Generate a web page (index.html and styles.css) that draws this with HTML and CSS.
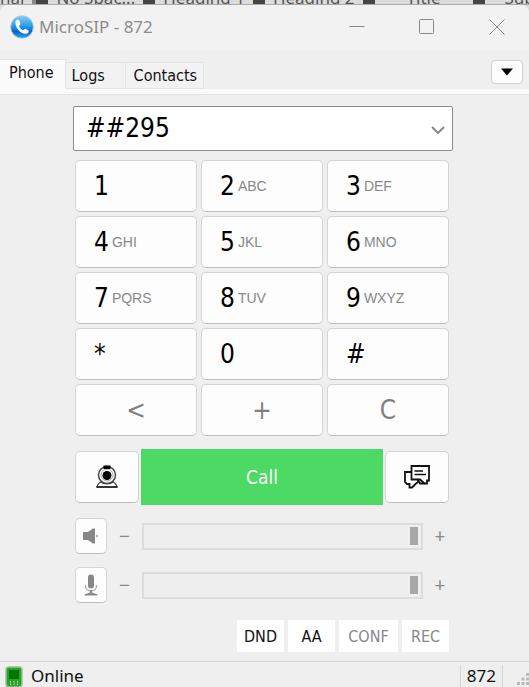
FILE: index.html
```html
<!DOCTYPE html>
<html lang="en">
<head>
    <meta charset="UTF-8">
    <meta name="viewport" content="width=device-width, initial-scale=1.0">
    <title>MicroSIP - 872</title>
    <link rel="stylesheet" href="styles.css">
</head>
<body>
    <div class="backdrop">
        <span>nal</span>
        <i class="mark double"></i>
        <span>No Spac...</span>
        <i class="mark"></i>
        <span>Heading 1</span>
        <i class="mark"></i>
        <span>Heading 2</span>
        <i class="mark"></i>
        <span class="style-title">Title</span>
        <i class="mark"></i>
        <span class="style-sub">Sub</span>
    </div>
    <div class="window">
        <header class="title-bar">
            <svg class="logo" viewBox="0 0 24 24">
                <defs>
                    <linearGradient id="ball" x1="0" y1="0" x2="0" y2="1">
                        <stop offset="0" stop-color="#8ccdf0"/>
                        <stop offset="0.45" stop-color="#2a9de6"/>
                        <stop offset="0.7" stop-color="#0b62cc"/>
                        <stop offset="1" stop-color="#25aef2"/>
                    </linearGradient>
                </defs>
                <circle cx="12" cy="12" r="11.3" fill="url(#ball)" stroke="#a9c9e2" stroke-width="0.8"/>
                <path d="M5.500 6.500C6.500 4.500 8.500 4.500 9.300 5.500L10.500 8.500C10.800 9.600 9.200 10.300 9 11C9.500 13 11.300 14.600 13 15.200C13.800 15 14.500 13.600 15.500 13.800L18.500 15.500C19.300 16.500 18 18.600 16.300 18.800C10.500 19.300 4.800 12.500 5.500 6.500Z" fill="#f4fbff"/>
            </svg>
            <h1>MicroSIP - 872</h1>
            <div class="window-btns">
                <button aria-label="Minimize">
                    <svg viewBox="0 0 16 16"><path d="M0.500 7.500H15.500"/></svg>
                </button>
                <button aria-label="Maximize">
                    <svg viewBox="0 0 16 16"><rect x="0.500" y="0.500" width="14" height="14" rx="1"/></svg>
                </button>
                <button aria-label="Close">
                    <svg viewBox="0 0 16 16"><path d="M0.500 0.500L15.500 15.500M15.500 0.500L0.500 15.500"/></svg>
                </button>
            </div>
        </header>
        <nav class="tabs">
            <button class="tab active">Phone</button>
            <button class="tab">Logs</button>
            <button class="tab">Contacts</button>
            <button class="menu-btn" aria-label="Menu">
                <svg viewBox="0 0 12 8"><path d="M0 0.500H12L6 7.500Z"/></svg>
            </button>
        </nav>
        <main class="phone">
            <div class="number-box">
                <input type="text" value="##295" aria-label="Number">
                <button aria-label="Recent numbers">
                    <svg viewBox="0 0 14 8"><path d="M1 1L7 7L13 1"/></svg>
                </button>
            </div>
            <div class="keypad">
                <button class="key">1</button>
                <button class="key">2<small>ABC</small></button>
                <button class="key">3<small>DEF</small></button>
                <button class="key">4<small>GHI</small></button>
                <button class="key">5<small>JKL</small></button>
                <button class="key">6<small>MNO</small></button>
                <button class="key">7<small>PQRS</small></button>
                <button class="key">8<small>TUV</small></button>
                <button class="key">9<small>WXYZ</small></button>
                <button class="key">*</button>
                <button class="key">0</button>
                <button class="key">#</button>
                <button class="key edit">&lt;</button>
                <button class="key edit">+</button>
                <button class="key edit">C</button>
            </div>
            <div class="call-row">
                <button class="side-btn" aria-label="Video call">
                    <svg width="22" height="24" viewBox="0 0 22 24">
                        <circle cx="11" cy="10" r="8.500" fill="#fff" stroke="#444" stroke-width="1.500"/>
                        <circle cx="11" cy="10" r="6" fill="none" stroke="#aaa"/>
                        <circle cx="11" cy="10.500" r="4.500"/>
                        <path d="M7.500 0.500H14.500V4H7.500Z"/>
                        <path d="M4.500 17C3 18 1.500 19.500 1 21.800H21C20.500 19.500 19 18 17.500 17C14 19.500 8 19.500 4.500 17Z" fill="#fff" stroke="#444" stroke-width="1.300"/>
                        <path d="M0.500 21H21.500V23H0.500Z" fill="#333"/>
                    </svg>
                </button>
                <button class="call-btn">Call</button>
                <button class="side-btn" aria-label="Message">
                    <svg width="26" height="24" viewBox="0 0 26 24" fill="#fff" stroke="#111" stroke-width="1.800">
                        <path d="M1 7H14V17L11.500 19L8 22.500H5.500V19H3L1 17Z"/>
                        <path d="M7.500 1H25V15.500H23V18.500H20.500L16 14.500H7.500Z"/>
                        <path d="M14 15L16 18.500L20.500 18.500" fill="none"/>
                        <path d="M10.500 6H19M10.500 9.500H22" stroke-width="1.500"/>
                    </svg>
                </button>
            </div>
            <div class="volume-row">
                <button class="mute-btn" aria-label="Mute speaker">
                    <svg width="16" height="16" viewBox="0 0 16 16">
                        <path d="M0 4H5L10 0.500H12V15.500H10L5 12H0Z"/>
                        <path d="M13.500 6.500Q16.500 8 13.500 9.500Z"/>
                    </svg>
                </button>
                <span class="sign">−</span>
                <input type="range" min="0" max="100" value="100" aria-label="Speaker volume">
                <span class="sign">+</span>
            </div>
            <div class="volume-row">
                <button class="mute-btn" aria-label="Mute microphone">
                    <svg width="14" height="22" viewBox="0 0 14 22">
                        <rect x="4" y="0.500" width="6" height="14" rx="3"/>
                        <path d="M1.500 11V12C1.500 18.500 12.500 18.500 12.500 12V11" fill="none" stroke="#aaa" stroke-width="1.300"/>
                        <path d="M6 16H8V18.500L13.500 20.500V21.500H0.500V20.500L6 18.500Z"/>
                    </svg>
                </button>
                <span class="sign">−</span>
                <input type="range" min="0" max="100" value="100" aria-label="Microphone volume">
                <span class="sign">+</span>
            </div>
            <div class="options">
                <button>DND</button>
                <button>AA</button>
                <button class="off wide">CONF</button>
                <button class="off">REC</button>
            </div>
        </main>
        <footer class="status-bar">
            <svg class="online-icon" viewBox="0 0 18 21">
                <rect x="1" y="1" width="16" height="20" rx="3" fill="#2f9e2f" stroke="#8ccb8c" stroke-width="1.500"/>
                <rect x="4" y="4" width="10" height="9" fill="#007500"/>
                <path d="M5.500 15V20M9 15V20M12.500 15V20" stroke="#b9e6b0" stroke-dasharray="1.500 1"/>
            </svg>
            <span class="status">Online</span>
            <span class="account">872</span>
            <svg class="grip" viewBox="0 0 12 12">
                <path d="M9 0H12V3H9ZM4.500 4.500H7.500V7.500H4.500ZM9 4.500H12V7.500H9ZM0 9H3V12H0ZM4.500 9H7.500V12H4.500ZM9 9H12V12H9Z"/>
            </svg>
        </footer>
    </div>
</body>
</html>
```
FILE: styles.css
```css
* {
    box-sizing: border-box;
}
body {
    margin: 0;
    min-height: 100vh;
    display: flex;
    flex-direction: column;
    background: #dcdcdc;
    font-family: Tahoma, "DejaVu Sans Condensed", "Noto Sans", sans-serif;
    font-size: 16px;
    color: #111;
}
button {
    padding: 0;
    border: 0;
    font: inherit;
    color: inherit;
    background: none;
    cursor: pointer;
}

/* sliver of the document window behind */
.backdrop {
    height: 5px;
    display: flex;
    align-items: flex-end;
    gap: 8px;
    overflow: hidden;
    white-space: nowrap;
    font-family: "Noto Sans", "Open Sans", sans-serif;
    font-size: 17px;
    line-height: 12px;
    color: #555;
    border-bottom: 1px solid #aaa;
}
.backdrop span {
    flex: none;
}
.mark {
    flex: none;
    width: 12px;
    height: 4px;
    background: #444;
}
.double {
    width: 16px;
    border-left: 4px solid #888;
}
.style-title {
    margin: 0 24px;
}
.style-sub {
    margin-left: 12px;
}

.window {
    flex: 1;
    display: flex;
    flex-direction: column;
    background: #efefef;
    border-radius: 8px 8px 0 0;
    overflow: hidden;
}
.title-bar {
    height: 46px;
    display: flex;
    align-items: center;
    padding: 0 24px 3px 10px;
    background: #f2f2f2;
}
.logo {
    width: 24px;
    height: 24px;
}
.title-bar h1 {
    margin: 0 0 0 5px;
    font-family: "Noto Sans", "Open Sans", sans-serif;
    font-size: 17px;
    font-weight: 400;
    color: #8c8c8c;
}
.window-btns {
    margin-left: auto;
    display: flex;
    gap: 54px;
}
.window-btns button {
    display: flex;
}
.window-btns svg {
    width: 16px;
    height: 16px;
    fill: none;
    stroke: #888;
}

.tabs {
    height: 43px;
    display: flex;
    align-items: flex-end;
    border-bottom: 5px solid #fafafa;
    box-shadow: 0 1px #e4e4e4;
}
.tab {
    height: 27px;
    padding: 0 6px 0 8px;
    border: 1px solid #e4e4e4;
    border-left: 0;
    background: #f2f2f2;
}
.tab:nth-child(2) {
    width: 60px;
    padding-left: 6px;
    text-align: left;
}
.tab.active {
    height: 30px;
    padding: 0 11px 4px 9px;
    border-bottom: 0;
    background: #fbfbfb;
}
.menu-btn {
    width: 32px;
    height: 24px;
    margin: 0 6px 5px auto;
    border: 1px solid #d0d0d0;
    border-radius: 4px;
    background: #fdfdfd;
}
.menu-btn svg {
    width: 12px;
    height: 8px;
    display: block;
    margin: auto;
}

.phone {
    flex: 1;
    padding: 12px 80px 0 75px;
}
.number-box {
    height: 45px;
    display: flex;
    margin: 0 -4px 9px -2px;
    border: 1px solid #8c8c8c;
    border-radius: 2px;
    background: #fff;
}
.number-box input {
    flex: 1;
    min-width: 0;
    padding: 0 12px 2px;
    border: 0;
    outline: 0;
    background: none;
    font: inherit;
    font-size: 26px;
    color: #000;
}
.number-box button {
    width: 28px;
}
.number-box svg {
    width: 14px;
    height: 8px;
    fill: none;
    stroke: #888;
    stroke-width: 2;
}
.keypad {
    display: grid;
    grid-template-columns: repeat(3, 1fr);
    gap: 4px;
}
.key,
.side-btn,
.mute-btn {
    border: 1px solid #d4d4d4;
    border-bottom-color: #bcbcbc;
    border-radius: 5px;
    background: #fdfdfd;
}
.key {
    height: 52px;
    display: flex;
    align-items: center;
    padding-left: 18px;
    font-size: 26px;
    color: #000;
}
.key small {
    margin-left: 3px;
    font-family: "Liberation Sans", Arial, sans-serif;
    font-size: 14px;
    color: #888;
}
.key.edit {
    justify-content: center;
    padding: 0;
    color: #808080;
}
.call-row {
    display: flex;
    align-items: center;
    gap: 2px;
    margin: 13px 0;
}
.side-btn {
    width: 64px;
    height: 52px;
    display: grid;
    place-items: center;
}
.call-btn {
    flex: 1;
    height: 56px;
    background: #4cd964;
    font-size: 19px;
    color: #fff;
}
.volume-row {
    height: 36px;
    display: flex;
    align-items: center;
    margin-bottom: 13px;
}
.mute-btn {
    width: 32px;
    height: 36px;
    display: grid;
    place-items: center;
    fill: #888;
}
.sign {
    width: 35px;
    text-align: center;
    font-family: "Noto Sans", "Open Sans", sans-serif;
    font-size: 19px;
    color: #888;
}
.sign:last-child {
    width: 18px;
    margin-left: 8px;
}
input[type="range"] {
    flex: 1;
    min-width: 0;
    height: 27px;
    margin: 0;
    padding: 0 3px;
    appearance: none;
    border: 2px solid #dcdcdc;
    background: #eee;
}
input[type="range"]::-webkit-slider-thumb {
    appearance: none;
    width: 8px;
    height: 18px;
    background: #a8a8a8;
}
.options {
    display: flex;
    justify-content: flex-end;
    gap: 4px;
    margin-top: 17px;
}
.options button {
    width: 47px;
    height: 32px;
    background: #fff;
}
.options .wide {
    width: 59px;
}
.options .off {
    color: #888;
}

.status-bar {
    height: 26px;
    display: flex;
    align-items: center;
    padding: 3px 0 0 5px;
    border-top: 1px solid #d6d6d6;
    font-family: "Noto Sans", "Open Sans", sans-serif;
    font-size: 17px;
    line-height: 22px;
}
.online-icon {
    width: 18px;
    height: 21px;
}
.status {
    margin-left: 8px;
}
.account {
    margin-left: auto;
    padding: 0 6px;
    border: 1px solid #d6d6d6;
    border-width: 0 1px;
}
.grip {
    width: 12px;
    height: 12px;
    margin: 6px 0 0 14px;
    fill: #bbb;
}
```
